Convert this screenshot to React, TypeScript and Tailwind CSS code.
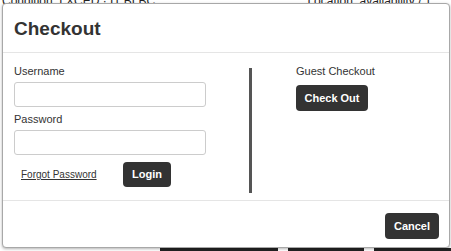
import React from "react";

const App = () => {
  return (
    <main
      className="relative w-[451px] h-[251px] overflow-hidden bg-white"
      style={{ fontFamily: '"Liberation Sans", Arial, sans-serif' }}
    >
      {/* page behind the modal */}
      <div className="flex gap-[150px] pl-[2px] -mt-[8px] text-[12px] text-[#222]">
        <span>Condition: LXCED · IT BLBC (0)</span>
        <span>Location: availability / 1 Order</span>
      </div>
      <div className="absolute left-[160px] top-[248px] flex gap-[10px]">
        <div className="w-[118px] h-[6px] bg-[#222]" />
        <div className="w-[76px] h-[6px] bg-[#222]" />
        <div className="w-[80px] h-[6px] bg-[#222]" />
      </div>

      <div className="absolute left-[2px] top-[3px] w-[448px] h-[245px] bg-white border border-[#a8a8a8] rounded-[4px] shadow-[0_1px_3px_rgba(0,0,0,0.3)] flex flex-col text-[#333]">
        <div className="h-[49px] border-b border-[#e5e5e5] px-[11px] flex items-center">
          <h2 className="text-[19px] font-bold leading-none pt-[1px]">Checkout</h2>
        </div>

        <div className="flex h-[148px] border-b border-[#e5e5e5]">
          <div className="w-[246px] pl-[11px] pt-[11px] text-[11px]">
            <label className="block leading-[14px]">Username</label>
            <input className="block mt-[4px] w-[192px] h-[25px] border border-[#ccc] rounded-[3px]" />
            <label className="block mt-[5px] leading-[14px]">Password</label>
            <input className="block mt-[4px] w-[192px] h-[25px] border border-[#ccc] rounded-[3px]" />
            <div className="flex items-center mt-[7px]">
              <a className="ml-[7px] w-[102px] text-[10px] underline">Forgot Password</a>
              <button className="h-[25px] w-[48px] bg-[#333] text-white font-bold text-[11px] rounded-[4px]">
                Login
              </button>
            </div>
          </div>
          <div className="mt-[15px] w-[3px] h-[125px] bg-[#555]" />
          <div className="pl-[44px] pt-[11px] text-[11px]">
            <div className="leading-[14px]">Guest Checkout</div>
            <button className="mt-[7px] h-[26px] w-[72px] bg-[#333] text-white font-bold text-[11px] rounded-[4px]">
              Check Out
            </button>
          </div>
        </div>

        <div className="flex justify-end pr-[10px] pt-[12px]">
          <button className="h-[26px] w-[54px] bg-[#333] text-white font-bold text-[11px] rounded-[4px]">
            Cancel
          </button>
        </div>
      </div>
    </main>
  );
};

export default App;
